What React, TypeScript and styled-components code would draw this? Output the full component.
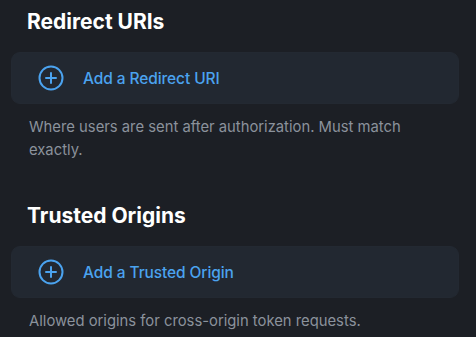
import React from "react";
import styled, { createGlobalStyle } from "styled-components";

const Global = createGlobalStyle`
  html, body { margin: 0; padding: 0; background: #1c1f25; }
  body { font-family: Inter, "Noto Sans", sans-serif; -webkit-font-smoothing: antialiased; }
`;

const Page = styled.div`
  padding: 8px 17px 0 11px;
  display: flex;
  flex-direction: column;
  gap: 40px;
`;

const Section = styled.section`
  display: flex;
  flex-direction: column;
`;

const Heading = styled.h2`
  margin: 0 0 16px 16px;
  font-size: 21px;
  line-height: 28px;
  font-weight: 700;
  color: #ffffff;
  letter-spacing: 0;
`;

const AddCard = styled.button`
  display: flex;
  align-items: center;
  gap: 19px;
  height: 52px;
  padding: 0 0 0 26px;
  border: 1px solid #232932;
  border-radius: 9px;
  background: #222831;
  color: #4ba3ef;
  font-family: inherit;
  font-size: 15.5px;
  font-weight: 500;
  letter-spacing: -0.1px;
  text-align: left;
  cursor: pointer;
`;

const Help = styled.p`
  margin: 12px 0 0 18px;
  font-size: 14.8px;
  line-height: 23px;
  color: #8b929c;
  max-width: 395px;
`;

const PlusIcon = () => (
  <svg width="26" height="26" viewBox="0 0 26 26" fill="none">
    <circle cx="13" cy="13" r="11.5" stroke="#4ba3ef" strokeWidth="2" />
    <path d="M13 8v10M8 13h10" stroke="#4ba3ef" strokeWidth="2" strokeLinecap="round" />
  </svg>
);

const sections = [
  {
    title: "Redirect URIs",
    action: "Add a Redirect URI",
    help: "Where users are sent after authorization. Must match exactly.",
  },
  {
    title: "Trusted Origins",
    action: "Add a Trusted Origin",
    help: "Allowed origins for cross-origin token requests.",
  },
];

export default function App() {
  return (
    <>
      <Global />
      <Page>
        {sections.map((s) => (
          <Section key={s.title}>
            <Heading>{s.title}</Heading>
            <AddCard type="button">
              <PlusIcon />
              {s.action}
            </AddCard>
            <Help>{s.help}</Help>
          </Section>
        ))}
      </Page>
    </>
  );
}
